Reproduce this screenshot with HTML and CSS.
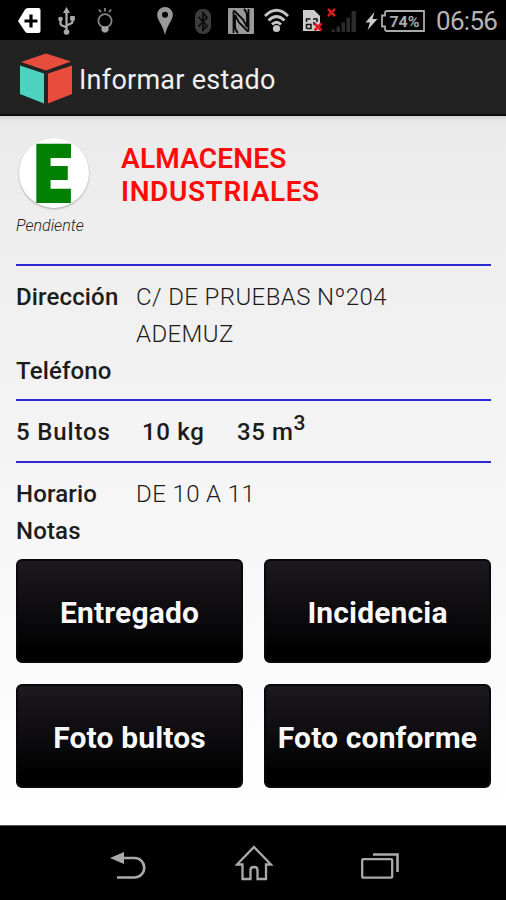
FILE: index.html
```html
<!DOCTYPE html>
<html lang="es">
<head>
    <meta charset="UTF-8">
    <meta name="viewport" content="width=device-width, initial-scale=1.0">
    <title>Informar estado</title>
    <link rel="stylesheet" href="styles.css">
</head>
<body>
    <div class="status-bar">
        <svg class="icon tag" width="23" height="26" viewBox="0 0 23 26">
            <path d="M0 13 7 1.5Q8 0 10 0H20.500Q22.500 0 22.500 2V23Q22.500 25 20.500 25H10Q8 25 7 23.500Z" fill="#fff"/>
            <path d="M13 6.500V19.500M6.500 13H19.500" stroke="#000" stroke-width="3.200"/>
        </svg>
        <svg class="icon usb" width="17" height="28" viewBox="0 0 17 28" fill="none" stroke="#aaa" stroke-width="2.300">
            <path d="M8.500 5V24M2.500 11V16.500Q2.500 18 4 18.500L8.500 20.500M14.500 11V14.500Q14.500 16 13 16.500L8.500 18.500"/>
            <path d="M8.500 0 12 6H5Z" fill="#aaa" stroke="none"/>
            <circle cx="8.500" cy="25" r="2.800" fill="#aaa" stroke="none"/>
            <circle cx="2.500" cy="12" r="2.300" fill="#aaa" stroke="none"/>
            <path d="M12.200 9H16.800V13.500H12.200Z" fill="#aaa" stroke="none"/>
        </svg>
        <svg class="icon bulb" width="16" height="25" viewBox="0 0 16 25" fill="none" stroke="#858585" stroke-width="1.800">
            <circle cx="8" cy="12.800" r="6.600"/>
            <path d="M4.500 18.500H11.500V22.500L9.500 24.500H6.500L4.500 22.500Z" fill="#a5a5a5" stroke="none"/>
            <path d="M8 0V3.500M2 1.500 4 4.200M14 1.500 12 4.200"/>
        </svg>
        <svg class="icon pin" width="16" height="28" viewBox="0 0 16 28">
            <path d="M8 0A7.800 7.800 0 0 1 15.800 8C15.800 13 10.500 17 8 28C5.500 17 .2 13 .2 8A7.800 7.800 0 0 1 8 0ZM8 4.800A3 3 0 1 0 8 10.800A3 3 0 1 0 8 4.800Z" fill="#999" fill-rule="evenodd"/>
        </svg>
        <svg class="icon bluetooth" width="16" height="26" viewBox="0 0 16 26">
            <rect y="1" width="16" height="25" rx="7.500" fill="#3c3c3c"/>
            <path d="M3.500 9 12 18 8 22V5L12 9.500 3.500 18.500" fill="none" stroke="#0c0c0c" stroke-width="1.800"/>
        </svg>
        <svg class="icon nfc" width="26" height="27" viewBox="0 0 26 27">
            <rect y="1" width="26" height="26" rx="1" fill="#999"/>
            <path d="M5.500 26V5Q5.500 3 7 4.500L15 12.500 19 20V9Q19 5 16 2M20.500 2V23Q20.500 25 19 23.500L11 15.500 7 8V19Q7 23 10 26" fill="none" stroke="#080808" stroke-width="1.800"/>
        </svg>
        <svg class="icon wifi" width="25" height="25" viewBox="0 0 25 25" fill="none" stroke="#c4c4c4" stroke-width="2.800">
            <path d="M1 8Q12.500-3.500 24 8M4.500 12.500Q12.500 4.500 20.500 12.500M8 16.500Q12.500 12 17 16.500"/>
            <circle cx="12.500" cy="20.500" r="3.600" fill="#c4c4c4" stroke="none"/>
        </svg>
        <svg class="icon sim" width="21" height="24" viewBox="0 0 21 24">
            <path d="M1 1H12L18 7V22H1Z" fill="#ccc"/>
            <path d="M4.500 13V10H8.500M11 10H15V13M4.500 19.500V15.500H9V19.500H4.500M12 13V16" fill="none" stroke="#111" stroke-width="1.500"/>
            <path d="M12.500 14.500 19.500 21.500M19.500 14.500 12.500 21.500" stroke="#e3181c" stroke-width="2.800"/>
        </svg>
        <svg class="icon signal" width="30" height="26" viewBox="0 0 30 26">
            <path d="M4.500 21.500H8V24H4.500ZM9.500 18.500H13V24H9.500ZM14.500 14.500H18V24H14.500ZM19.500 9.500H23V24H19.500ZM24.500 3H29V24H24.500Z" fill="#2c2c2c"/>
            <path d="M1 1 8 8M8 1 1 8" stroke="#d41c20" stroke-width="2.500"/>
        </svg>
        <svg class="icon bolt" width="13" height="20" viewBox="0 0 13 20">
            <path d="M9.500 1 .5 11.500H5L2.500 19 12.500 8H7.500Z" fill="#ccc"/>
        </svg>
        <div class="battery">
            <svg width="44" height="22" viewBox="0 0 44 22">
                <path d="M6 1H43V21H6Q4 21 4 19V16.500H1V5.500H4V3Q4 1 6 1Z" fill="none" stroke="#aaa" stroke-width="1.800"/>
                <text class="battery-level" x="8.500" y="16.500" textLength="30" lengthAdjust="spacingAndGlyphs">74%</text>
            </svg>
        </div>
        <span class="clock">06:56</span>
    </div>

    <div class="action-bar">
        <svg class="logo" width="54" height="52" viewBox="0 0 54 52">
            <path d="M27 .5 52 8.500 27 17.500 2 9Z" fill="#e74c3c"/>
            <path d="M1 12.500 25 20.500V50.500L1 41Z" fill="#4ed2c0"/>
            <path d="M53 12.500 29 20.500V50.500L53 41Z" fill="#e74c3c"/>
        </svg>
        <h1>Informar estado</h1>
    </div>

    <main class="content">
        <div class="customer">
            <div class="state">
                <div class="badge">
                    <svg width="70" height="70" viewBox="0 0 70 70">
                        <text class="badge-letter" transform="translate(15.500 62.700) scale(.82 1)">E</text>
                    </svg>
                </div>
                <span class="state-label">Pendiente</span>
            </div>
            <h2>ALMACENES<br><span class="wide">INDUSTRIALES</span></h2>
        </div>

        <div class="section address">
            <div class="row"><b>Dirección</b><span class="value">C/ DE PRUEBAS Nº204<br>ADEMUZ</span></div>
            <div class="row"><b>Teléfono</b></div>
        </div>

        <div class="section load">
            <b class="packages">5 Bultos</b>
            <b class="weight">10 kg</b>
            <b class="volume">35 m<sup>3</sup></b>
        </div>

        <div class="section schedule">
            <div class="row"><b>Horario</b><span class="value">DE 10 A 11</span></div>
            <div class="row"><b>Notas</b></div>
        </div>

        <div class="actions">
            <button>Entregado</button>
            <button>Incidencia</button>
            <button>Foto bultos</button>
            <button>Foto conforme</button>
        </div>
    </main>

    <div class="nav-bar">
        <svg width="36" height="28" viewBox="0 0 36 28">
            <path d="M12 6H24.500A9.500 9.500 0 0 1 24.500 25.500H7" fill="none" stroke="#aaa" stroke-width="2.600"/>
            <path d="M0 6 14 0V12Z" fill="#aaa"/>
        </svg>
        <svg class="home" width="38" height="36" viewBox="0 0 38 36">
            <path d="M19 2 36 19.500H31V34H22.500V25Q22.500 22 19 22T15.500 25V34H7.500V19.500H2Z" fill="none" stroke="#aaa" stroke-width="2.300"/>
        </svg>
        <svg width="38" height="28" viewBox="0 0 38 28" fill="none" stroke="#aaa">
            <rect x="1.200" y="7.200" width="30" height="18.500" rx="1" stroke-width="2.300"/>
            <path d="M12 2.500H36.500V20" stroke-width="2.600"/>
        </svg>
    </div>
</body>
</html>
```
FILE: styles.css
```css
* {
    box-sizing: border-box;
}
body {
    margin: 0;
    width: 506px;
    height: 900px;
    display: flex;
    flex-direction: column;
    overflow: hidden;
    background: #000;
    font-family: Roboto, "Noto Sans", sans-serif;
}

/* system status bar */
.status-bar {
    height: 40px;
    padding: 1px 0 0 18px;
    display: flex;
    align-items: center;
    background: #000;
}
.icon {
    flex: none;
}
.usb {
    margin-left: 17px;
}
.bulb {
    margin-left: 22px;
}
.pin {
    margin-left: 44px;
}
.bluetooth {
    margin-left: 22px;
}
.nfc {
    margin-left: 17px;
}
.wifi {
    margin-left: 10px;
}
.sim {
    margin-left: 13px;
}
.signal {
    margin-left: 4px;
}
.bolt {
    margin-left: 8px;
}
.battery {
    display: flex;
    margin-left: 3px;
}
.battery-level {
    font-size: 15px;
    font-weight: 700;
    fill: #aaa;
}
.clock {
    margin-left: 11px;
    font-size: 26px;
    line-height: 40px;
    letter-spacing: -0.7px;
    color: #b4b4b4;
}

/* title bar */
.action-bar {
    height: 76px;
    padding: 4px 0 0 19px;
    display: flex;
    align-items: center;
    gap: 6px;
    background: #222;
    border-bottom: 2px solid #0c0c0c;
}
.action-bar h1 {
    margin: 0;
    padding-top: 1px;
    font-size: 27px;
    font-weight: 400;
    letter-spacing: 0.25px;
    color: #f0f0f0;
}

.content {
    height: 709px;
    padding: 0 15px 0 16px;
    background: linear-gradient(#d0d0d0, #e6e6e6 4px, #ebebeb 14px, #fff 100%);
    color: #1c1c1c;
}
.customer {
    height: 148px;
    padding-top: 22px;
    display: flex;
    gap: 27px;
}
.state {
    width: 78px;
}
.badge {
    width: 70px;
    height: 70px;
    margin-left: 3px;
    border-radius: 50%;
    background: #fff;
    box-shadow: 0 1px 2px rgba(0, 0, 0, 0.3);
}
.badge svg {
    display: block;
    overflow: visible;
}
.badge-letter {
    font-size: 78px;
    font-weight: 900;
    fill: #008000;
    stroke: #008000;
    stroke-width: 4px;
}
.state-label {
    display: block;
    margin-top: 8px;
    font-size: 16px;
    line-height: 20px;
    font-style: italic;
    font-weight: 300;
    color: #222;
}
.customer h2 {
    margin: 4px 0 0;
    font-size: 28px;
    line-height: 33px;
    font-weight: 600;
    letter-spacing: 0.2px;
    color: #ff0a0a;
}
.customer .wide {
    letter-spacing: 0.6px;
}

.section {
    border-top: 2px solid #2c28d2;
    font-size: 24px;
}
.section b {
    font-weight: 500;
    letter-spacing: 0.15px;
}
.row {
    display: flex;
    line-height: 37px;
}
.row b {
    width: 120px;
}
.value {
    font-weight: 300;
    letter-spacing: 0.4px;
}
.address {
    height: 135px;
    padding-top: 13px;
}
.load {
    height: 62px;
    display: flex;
    line-height: 63px;
}
.load .packages {
    width: 126px;
    letter-spacing: 0.85px;
}
.load .weight {
    width: 95px;
    letter-spacing: 0.7px;
}
.load .volume {
    letter-spacing: 0.6px;
}
.load sup {
    position: relative;
    top: -10px;
    font-size: 21px;
    line-height: 0;
    vertical-align: baseline;
}
.schedule {
    height: 98px;
    padding-top: 13px;
}

.actions {
    display: grid;
    grid-template-columns: 1fr 1fr;
    gap: 21px;
}
.actions button {
    height: 104px;
    padding: 2px 0 0;
    border: 2px solid #08080a;
    border-radius: 6px;
    background: linear-gradient(#1c191f, #000 92%);
    font-family: inherit;
    font-size: 30px;
    font-weight: 700;
    letter-spacing: 0.15px;
    color: #f8f8f8;
    text-shadow: 0 0 2px #000;
    white-space: nowrap;
}

/* system navigation */
.nav-bar {
    height: 75px;
    padding: 6px 107px 0 110px;
    display: flex;
    align-items: center;
    justify-content: space-between;
    border-top: 1px solid #555;
    background: #000;
}
.home {
    margin-bottom: 6px;
}
```
